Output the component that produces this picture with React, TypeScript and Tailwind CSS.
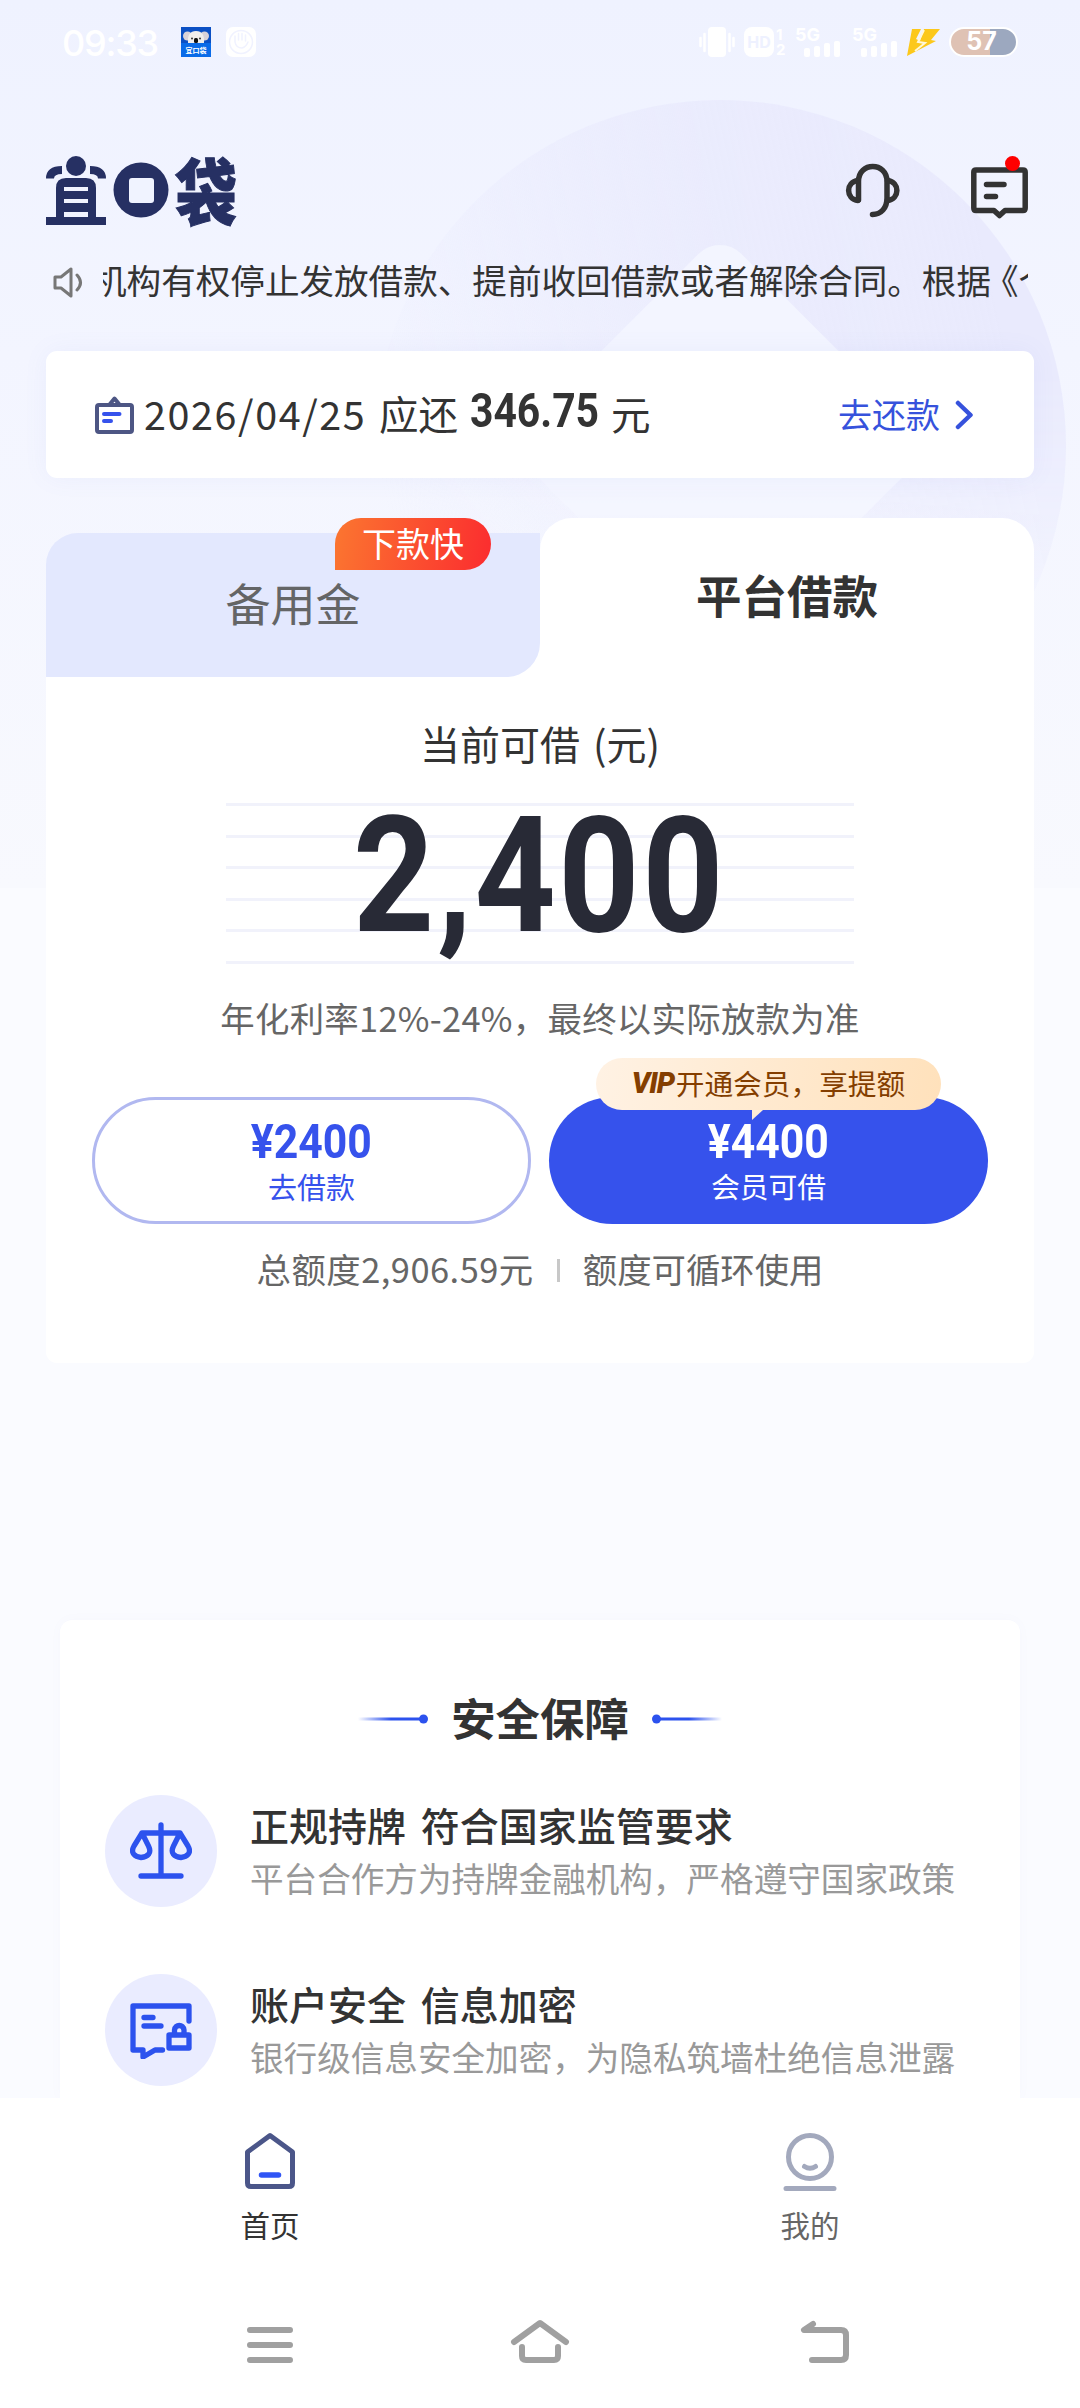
import React from "react";

const CJK = "font-['Noto_Sans_CJK_SC',sans-serif]";

function Logo() {
  return (
    <svg className="overflow-visible" width="190" height="69" viewBox="46 156 190 69" fill="#263063" aria-label="宜口袋">
      <circle cx="76" cy="166" r="10" />
      <path d="M50 178.500 Q50 170 62 170M102 178.500 Q102 170 90 170" fill="none" stroke="#263063" strokeWidth="8" />
      <path fillRule="evenodd" d="M56 217V188Q56 178 66 178H86Q96 178 96 188V217H106V225H46V217ZM64 187V191H88V187ZM64 199V203H88V199ZM64 212V217H88V212Z" />
      <circle cx="141" cy="190" r="27.500" />
      <rect x="129" y="178" width="25" height="25" rx="3" fill="#f0f3ff" />
      <text x="175" y="218.500" fontSize="72" fontWeight="900" fontFamily="Noto Sans CJK SC" textLength="62" lengthAdjust="spacingAndGlyphs" stroke="#263063" strokeWidth="1">袋</text>
    </svg>
  );
}

function AppBadge() {
  return (
    <svg width="30" height="30" viewBox="0 0 30 30">
      <rect width="30" height="30" fill="#0b50c4" />
      <rect y="16" width="30" height="14" fill="#0a6be8" />
      <circle cx="6.500" cy="9" r="4.500" fill="#d9d2d8" />
      <circle cx="23.500" cy="9" r="4.500" fill="#d9d2d8" />
      <path d="M7 16Q6 4 15 4Q24 4 23 16Z" fill="#f1eeec" />
      <rect x="13" y="11" width="4" height="5" rx="1.500" fill="#111" />
      <circle cx="11" cy="11.500" r="1" fill="#333" />
      <circle cx="19" cy="11.500" r="1" fill="#333" />
      <text x="15" y="26" fontSize="7" textAnchor="middle" fill="#fff" fontWeight="700" fontFamily="Noto Sans CJK SC">宜口袋</text>
    </svg>
  );
}

function Signal() {
  return (
    <div className="relative h-[30px] w-[46px]">
      <span className="absolute left-0 top-0 font-['Inter',sans-serif] text-[18px] font-bold leading-[15px] text-white">5G</span>
      <svg className="absolute left-[9px] top-[14px]" width="37" height="16" fill="#fff">
        <rect x="0" y="7" width="6" height="9" rx="2" />
        <rect x="10" y="5" width="6" height="11" rx="2" />
        <rect x="20" y="2" width="6" height="14" rx="2" />
        <rect x="30" y="0" width="6" height="16" rx="2" />
      </svg>
    </div>
  );
}

function StatusBar() {
  return (
    <div className="flex h-[84px] items-center pl-[62px] pr-[62px] text-white">
      <span className="w-[119px] pt-[2px] font-['Inter',sans-serif] text-[36px] font-medium tracking-[-1.200px]">09:33</span>
      <AppBadge />
      <svg className="ml-[15px]" width="30" height="30" viewBox="0 0 30 30">
        <rect width="30" height="30" rx="7" fill="#fff" />
        <circle cx="15" cy="15" r="11.500" fill="none" stroke="#f0f2ff" strokeWidth="1.500" />
        <path d="M9 15V9M12.500 13V6.500M16 13V6.500M19.500 14V8M9 15Q10 21 16 21Q20 20 22 15" fill="none" stroke="#f0f2ff" strokeWidth="1.500" strokeLinecap="round" />
      </svg>
      <div className="ml-auto flex items-center">
        <svg width="36" height="30" viewBox="0 0 36 30">
          <rect x="9" y="0" width="18" height="30" rx="4" fill="#fff" />
          <path d="M5.500 7V24M1.500 11V19M30.500 7V24M34.500 11V19" stroke="#fff" strokeWidth="2.500" strokeLinecap="round" />
        </svg>
        <div className="ml-[9px] flex h-[30px] w-[30px] items-center justify-center rounded-[8px] bg-white font-['Inter',sans-serif] text-[16px] font-bold text-[#eef1ff]">HD</div>
        <div className="ml-[2px] flex w-[19px] flex-col font-['Inter',sans-serif] text-[15px] font-bold leading-[15px]">
          <span>1</span>
          <span>2</span>
        </div>
        <div className="mr-[11px]"><Signal /></div>
        <Signal />
        <svg className="ml-[9px]" width="33" height="27" viewBox="0 0 33 27" fill="#fcc81b">
          <path d="M5 0H14L9 10L13 12L17 0H33L24 11L29 12L0 27Z" />
          <path d="M17 1L11 13L18 14L8 22" fill="none" stroke="#fff8d8" strokeWidth="2" />
        </svg>
        <div className="ml-[9px] flex h-[30px] w-[69px] items-center justify-center rounded-full border-2 border-white bg-[linear-gradient(90deg,#dfc2b4_60%,#9ca8bf_60%)] pr-[4px] font-['Inter',sans-serif] text-[25px] font-bold">57</div>
      </div>
    </div>
  );
}

function Header() {
  return (
    <header className="flex h-[176px] flex-col">
      <div className="flex h-[160px] items-start pl-[46px] pr-[52px] pt-[72px]">
        <Logo />
        <svg className="ml-auto mt-[5px]" width="58" height="62" viewBox="843 161 58 62" fill="none" stroke="#333" strokeWidth="5.500" strokeLinecap="round" strokeLinejoin="round">
          <path d="M858.500 200V181.500C858.500 161.500 887 161.500 887 181.500V198C887 208 881 214.500 872.500 214.500" />
          <path d="M858 180.500C845.500 182 845.500 199 858 200.500M887.500 180.500C900 182 900 199 887.500 200.500" />
        </svg>
        <div className="relative ml-[70px] mt-[11px]">
          <svg width="57" height="52" viewBox="0 0 57 52" fill="none" stroke="#333" strokeWidth="5.500" strokeLinecap="round" strokeLinejoin="round">
            <path d="M5 3H52Q54.200 3 54.200 5V41Q54.200 43.500 52 43.500H34L28.500 48.500L23 43.500H5Q2.800 43.500 2.800 41V5Q2.800 3 5 3ZM15.500 17.500H33M15.500 29.500H24.500" />
          </svg>
          <span className="absolute left-[34px] top-[-11px] h-[15px] w-[15px] rounded-full bg-[#fe0000]" />
        </div>
      </div>
    </header>
  );
}

function Notice() {
  return (
    <div className="flex h-[91px] items-start pl-[53px]">
      <svg className="mt-[7px]" width="30" height="31" viewBox="0 0 30 31" fill="none" stroke="#777" strokeWidth="3" strokeLinejoin="round" strokeLinecap="round">
        <path d="M2 10H8L18 2V29L8 21H2Z" />
        <path d="M24 8Q31 15.500 24 23" />
      </svg>
      <div className="relative ml-[20px] h-[44px] w-[925px] overflow-hidden">
        <p className="absolute left-[-11px] top-[-2px] whitespace-nowrap text-[34.600px] leading-[42px] text-[#333]">
          机构有权停止发放借款、提前收回借款或者解除合同。根据<span className="-ml-[7px]">《个人</span>
        </p>
      </div>
    </div>
  );
}

function RepayCard() {
  return (
    <section className="mx-[46px] flex h-[127px] items-center rounded-[11px] bg-white pl-[49px] pr-[60px] text-[#333] shadow-[0_0_24px_rgba(120,130,220,0.07)]">
      <svg width="39" height="38" viewBox="0 0 39 38" fill="none" stroke="#4d5684" strokeWidth="4" strokeLinejoin="round" strokeLinecap="round">
        <rect x="2" y="9" width="35" height="27" rx="2" />
        <path d="M15 8L19.500 2.500L24 8" />
        <path d="M9 18H24.500M9 25H16" stroke="#3652ec" />
      </svg>
      <span className="mb-[4px] ml-[10px] w-[225px] whitespace-nowrap text-[39.500px] tracking-[1.600px]">2026/04/25</span>
      <span className="mb-[4px] ml-[10px] text-[39.500px]">应还</span>
      <span className="mb-[7px] ml-[12px] w-[141px] whitespace-nowrap">
        <span className="inline-block origin-left scale-x-[0.860] font-['Roboto',sans-serif] text-[47.500px] font-bold leading-[60px]">346.75</span>
      </span>
      <span className="mb-[4px] text-[39.500px]">元</span>
      <span className="mb-[2px] ml-auto text-[34px] text-[#3652dc]">去还款</span>
      <svg className="ml-[15px]" width="19" height="30" viewBox="0 0 19 30" fill="none" stroke="#3652dc" strokeWidth="4.500" strokeLinecap="round" strokeLinejoin="round">
        <path d="M3 3L15.500 15L3 27" />
      </svg>
    </section>
  );
}

function Tabs() {
  return (
    <div className="flex h-[159px] items-end">
      <div className="flex h-[159px] w-[494px] items-end bg-[linear-gradient(transparent_60%,#fff_60%)]">
        <div className="relative flex h-[144px] w-full justify-center rounded-br-[34px] rounded-tl-[32px] bg-[#e3e8fe] pt-[39px] text-[45px] leading-[62px] text-[#646566]">
          备用金
          <span className="absolute left-[289px] top-[-15px] flex h-[52px] w-[156px] items-center justify-center rounded-[26px] rounded-bl-none bg-[linear-gradient(100deg,#fb7630,#fb2c2f)] text-[34px] leading-[52px] text-white">
            <span className="-mt-[3px]">下款快</span>
          </span>
        </div>
      </div>
      <div className="flex h-[159px] flex-1 justify-center rounded-t-[32px] bg-white pt-[46px] text-[45.500px] font-bold leading-[60px] text-[#333]">平台借款</div>
    </div>
  );
}

function Amount() {
  return (
    <div className="relative mx-auto mt-[27px] h-[161px] w-[628px]">
      <div className="flex h-full flex-col justify-between">
        {[0, 1, 2, 3, 4, 5].map((i) => (
          <div key={i} className="h-[3px] bg-[#f1f2fb]" />
        ))}
      </div>
      <div className="absolute left-[127px] top-0 origin-left scale-x-[0.880] whitespace-nowrap font-['Roboto',sans-serif] text-[161px] font-bold leading-[146px] tracking-[3px] text-[#282a36]">2,400</div>
    </div>
  );
}

function Buttons() {
  return (
    <div className="mx-[46px] mt-[55px] flex justify-between">
      <div className="flex h-[127px] w-[439px] flex-col items-center rounded-full border-[3px] border-[#b1b8f0] pt-[20px] text-[#3652ec]">
        <span className="scale-x-[0.900] font-['Roboto',sans-serif] text-[47.500px] font-bold leading-[44px]">¥2400</span>
        <span className="mt-[2px] text-[29px] leading-[40px]">去借款</span>
      </div>
      <div className="relative flex h-[127px] w-[439px] flex-col items-center rounded-full bg-[#3652ec] pt-[23px] text-white">
        <span className="scale-x-[0.900] font-['Roboto',sans-serif] text-[47.500px] font-bold leading-[44px]">¥4400</span>
        <span className="mt-[2px] text-[28.800px] leading-[40px]">会员可借</span>
        <div className="absolute left-[47px] top-[-39px] flex h-[52px] w-[345px] items-center justify-center rounded-full bg-[linear-gradient(100deg,#fff2e4,#ffe1bb)] text-[#843e00]">
          <span className="w-[44px] font-['Roboto',sans-serif] text-[29px] font-black italic tracking-[-1px]">VIP</span>
          <span className="-mt-[3px] text-[28.700px] leading-[40px]">开通会员，享提额</span>
          <svg className="absolute left-[156px] top-[52px]" width="11" height="10"><path d="M0 0H11L0 10Z" fill="#ffecd6" /></svg>
        </div>
      </div>
    </div>
  );
}

function ScaleIcon() {
  return (
    <svg width="62" height="58" viewBox="0 0 62 58" fill="none" stroke="#2c52ee" strokeWidth="5.300" strokeLinecap="round" strokeLinejoin="round">
      <path d="M31 3V54M11 54H51M12 11H50M12 11L4 24C0 31 5 35 11 35.500C18 35 22 31 18.500 24ZM50 11L58 24C62 31 57 35 51 35.500C44 35 40 31 43.500 24Z" />
    </svg>
  );
}

function PrivacyIcon() {
  return (
    <svg width="62" height="58" viewBox="0 0 62 58" fill="none" stroke="#2c52ee" strokeWidth="5.300" strokeLinecap="round" strokeLinejoin="round">
      <path d="M59 20V5H3V49H13V56L25 49H32.500M14 16.500H23M14 25H31" />
      <rect x="39" y="34" width="20" height="13" />
      <path d="M44.500 33V29C45 23 53.500 23 54 29V33" />
    </svg>
  );
}

function Assurance({ icon, title, text }: { icon: React.ReactNode; title: string; text: string }) {
  return (
    <div className="flex h-[179px] items-start pl-[45px]">
      <div className="flex h-[112px] w-[112px] items-center justify-center rounded-full bg-[#eaecff]">{icon}</div>
      <div className="ml-[33px] whitespace-nowrap">
        <h3 className="mt-[1px] text-[39px] font-medium leading-[56px] text-[#333] [word-spacing:6px]">{title}</h3>
        <p className="mt-[2px] text-[33.600px] leading-[48px] text-[#999]">{text}</p>
      </div>
    </div>
  );
}

function Security() {
  return (
    <section className="mx-[60px] mt-[257px] h-[478px] overflow-hidden rounded-t-[12px] bg-white shadow-[0_0_12px_rgba(120,130,200,0.03)]">
      <div className="flex h-[175px] items-start justify-center pt-[68px]">
        <svg className="mt-[26px]" width="70" height="10">
          <defs><linearGradient id="fadeL"><stop stopColor="#2c52ee" stopOpacity="0" /><stop offset=".5" stopColor="#2c52ee" /></linearGradient></defs>
          <rect y="3.500" width="66" height="3" fill="url(#fadeL)" /><circle cx="65.500" cy="5" r="4.500" fill="#2c52ee" />
        </svg>
        <h2 className="mx-[23px] -mt-[3px] text-[44.400px] font-bold leading-[64px] text-[#333]">安全保障</h2>
        <svg className="mt-[26px]" width="70" height="10">
          <defs><linearGradient id="fadeR"><stop offset=".5" stopColor="#2c52ee" /><stop offset="1" stopColor="#2c52ee" stopOpacity="0" /></linearGradient></defs>
          <rect x="4" y="3.500" width="66" height="3" fill="url(#fadeR)" /><circle cx="4.500" cy="5" r="4.500" fill="#2c52ee" />
        </svg>
      </div>
      <Assurance icon={<ScaleIcon />} title="正规持牌 符合国家监管要求" text="平台合作方为持牌金融机构，严格遵守国家政策" />
      <Assurance icon={<PrivacyIcon />} title="账户安全 信息加密" text="银行级信息安全加密，为隐私筑墙杜绝信息泄露" />
    </section>
  );
}

function BottomNav() {
  return (
    <nav className="grid h-[190px] grid-cols-2 bg-white pt-[33px] text-[29.500px] leading-[40px]">
      <div className="flex flex-col items-center text-[#333]">
        <svg width="52" height="60" viewBox="0 0 52 60" fill="none" stroke="#4b5689" strokeWidth="5" strokeLinejoin="round">
          <path d="M26 4.500L48.500 21V52Q48.500 55.500 45 55.500H7Q3.500 55.500 3.500 52V21Z" />
          <path d="M17.500 44H34.500" stroke="#3055f5" strokeLinecap="round" strokeWidth="5.500" />
        </svg>
        <span className="mt-[13px]">首页</span>
      </div>
      <div className="flex flex-col items-center text-[#666]">
        <svg width="54" height="60" viewBox="0 0 54 60" fill="none" stroke="#a3a9bd" strokeWidth="5" strokeLinecap="round">
          <circle cx="27" cy="26" r="21.500" />
          <path d="M21.500 35.500Q27 39 32.500 35.500M3 57.500H51" />
        </svg>
        <span className="mt-[13px]">我的</span>
      </div>
    </nav>
  );
}

function SystemNav() {
  return (
    <div className="flex h-[120px] items-start bg-white pl-[245px] pr-[229px] pt-[30px]">
      <svg width="50" height="48" fill="none" stroke="#a0a0a0" strokeWidth="6" strokeLinecap="round"><path d="M5 12H45M5 27H45M5 42H45" /></svg>
      <svg className="ml-[214px]" width="62" height="48" fill="none" stroke="#a0a0a0" strokeWidth="6" strokeLinecap="round" strokeLinejoin="round"><path d="M5 24L31 5L57 24M13 29V38Q13 42 17 42H45Q49 42 49 38V29" /></svg>
      <svg className="ml-auto" width="52" height="48" fill="none" stroke="#a0a0a0" strokeWidth="6" strokeLinecap="round" strokeLinejoin="round"><path d="M14 6L5 12H42Q47 12 47 17V37Q47 42 42 42H13" /></svg>
    </div>
  );
}

export default function App() {
  return (
    <div className={`relative h-[2408px] w-[1080px] overflow-hidden bg-[#fafbff] ${CJK}`}>
      <div className="absolute inset-x-0 top-0 h-[888px] bg-[linear-gradient(#eff2ff,#f3f5ff_40%,#f8f9fe)]">
        <svg width="1080" height="888" aria-hidden="true">
          <defs>
            <linearGradient id="coin" x1="0" y1="0.500" x2="0.900" y2="0.300">
              <stop stopColor="#e9eafd" stopOpacity="0" />
              <stop offset="0.600" stopColor="#e9eafd" stopOpacity="0.850" />
              <stop offset="1" stopColor="#e9eafd" />
            </linearGradient>
            <linearGradient id="coinFade" x1="0" y1="0" x2="0" y2="1">
              <stop offset="0.400" stopColor="#fff" />
              <stop offset="0.800" stopColor="#000" />
            </linearGradient>
            <mask id="coinMask"><rect x="370" y="95" width="700" height="700" fill="url(#coinFade)" /></mask>
          </defs>
          <g mask="url(#coinMask)">
            <circle cx="720" cy="446" r="346" fill="url(#coin)" />
            <rect x="569" y="295" width="302" height="302" rx="30" transform="rotate(45 720 446)" fill="#f3f5ff" />
          </g>
        </svg>
      </div>
      <div className="relative flex flex-col">
        <StatusBar />
        <Header />
        <Notice />
        <RepayCard />
        <main className="mx-[46px] mt-[40px] h-[845px]">
          <Tabs />
          <div className="h-[686px] rounded-b-[11px] bg-white">
            <p className="h-[99px] pt-[36px] text-center text-[40px] leading-[60px] text-[#333] [word-spacing:4px]">当前可借 (元)</p>
            <Amount />
            <p className="mt-[28px] h-[50px] whitespace-nowrap text-center text-[34.400px] leading-[50px] tracking-[0.300px] text-[#666]">年化利率12%-24%，最终以实际放款为准</p>
            <Buttons />
            <div className="mt-[19px] flex items-center justify-center text-[34.400px] leading-[50px] text-[#666]">
              <span className="tracking-[0.500px]">总额度2,906.59元</span>
              <span className="ml-[23px] mr-[23px] mt-[4px] h-[23px] w-[3px] bg-[#c8c8c8]" />
              <span>额度可循环使用</span>
            </div>
          </div>
        </main>
        <Security />
        <BottomNav />
        <SystemNav />
      </div>
    </div>
  );
}
